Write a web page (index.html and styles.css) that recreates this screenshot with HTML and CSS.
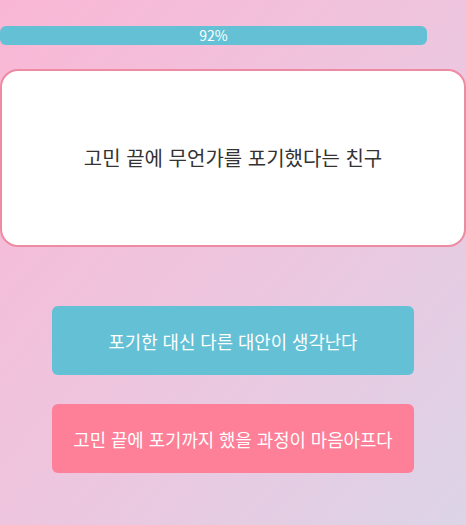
FILE: index.html
```html
<!DOCTYPE html>
<html lang="ko">
<head>
<meta charset="utf-8">
<link rel="stylesheet" href="styles.css">
</head>
<body>
<div class="page">
  <div class="progress"><span class="progress-label">92%</span></div>
  <div class="card"><p class="question">고민 끝에 무언가를 포기했다는 친구</p></div>
  <div class="choices">
    <button class="choice choice-blue">포기한 대신 다른 대안이 생각난다</button>
    <button class="choice choice-pink">고민 끝에 포기까지 했을 과정이 마음아프다</button>
  </div>
</div>
</body>
</html>
```

FILE: styles.css
```css
html, body {
  margin: 0;
  padding: 0;
}
body {
  width: 466px;
  height: 525px;
  overflow: hidden;
  font-family: "Noto Sans CJK KR", "Noto Sans", sans-serif;
  background: linear-gradient(to bottom right, #f9b7d5 0%, #eec5de 50%, #dcd4e8 100%);
}
.page {
  display: flex;
  flex-direction: column;
  padding-top: 26px;
}
.progress {
  width: 427px;
  height: 19px;
  background: #64c1d5;
  border-radius: 6px;
  display: flex;
  align-items: center;
  justify-content: center;
}
.progress-label {
  color: #ffffff;
  font-size: 14px;
  line-height: 19px;
}
.card {
  box-sizing: border-box;
  margin-top: 24px;
  width: 466px;
  height: 178px;
  background: #ffffff;
  border: 2px solid #ee8aa2;
  border-radius: 18px;
  display: flex;
  align-items: center;
  justify-content: center;
}
.question {
  margin: 0;
  font-size: 20px;
  color: #333333;
  padding-bottom: 2px;
}
.choices {
  display: flex;
  flex-direction: column;
  gap: 29px;
  margin-top: 59px;
  padding-left: 52px;
}
.choice {
  width: 362px;
  height: 69px;
  border: none;
  border-radius: 6px;
  color: #ffffff;
  font-family: "Noto Sans CJK KR", "Noto Sans", sans-serif;
  font-size: 17.8px;
  padding: 0;
}
.choice-blue {
  background: #64c1d5;
}
.choice-pink {
  background: #fe7f98;
}
```
